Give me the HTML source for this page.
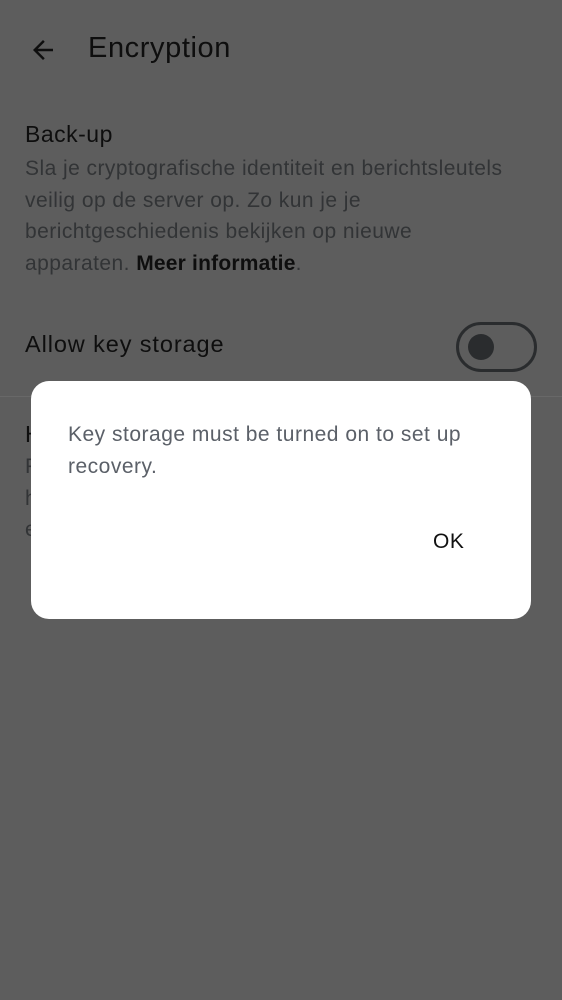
<!DOCTYPE html>
<html><head><style>
body{margin:0;width:562px;height:1000px;background:#5d5d5d;font-family:"Liberation Sans",sans-serif;position:relative;overflow:hidden}
.t{position:absolute;white-space:nowrap}
</style></head><body>
<svg class="t" style="left:28px;top:35px" width="30" height="30" viewBox="0 0 24 24"><path d="M20 11H7.8l5.6-5.6L12 4l-8 8 8 8 1.4-1.4L7.8 13H20z" fill="#0e0e0e"/></svg>
<div class="t" style="left:88px;top:32px;font-size:29px;letter-spacing:0.6px;color:#0e0e0e">Encryption</div>
<div class="t" style="left:25px;top:121px;font-size:23px;letter-spacing:0.5px;color:#0e0e0e">Back-up</div>
<div class="t" style="left:25px;top:153px;font-size:21px;letter-spacing:0.45px;line-height:31.5px;color:#323436">Sla je cryptografische identiteit en berichtsleutels<br>veilig op de server op. Zo kun je je<br>berichtgeschiedenis bekijken op nieuwe<br>apparaten. <b style="color:#0e0e0e;letter-spacing:0.2px">Meer informatie</b>.</div>
<div class="t" style="left:25px;top:331px;font-size:23.5px;letter-spacing:0.9px;color:#0e0e0e">Allow key storage</div>
<div class="t" style="left:456px;top:322px;width:81px;height:50px;border:3px solid #2a2c2e;border-radius:26px;box-sizing:border-box"></div>
<div class="t" style="left:468px;top:334px;width:26px;height:26px;border-radius:50%;background:#2a2c2e"></div>
<div class="t" style="left:0;top:396px;width:562px;height:1px;background:#686868"></div>
<div class="t" style="left:25px;top:421px;font-size:23px;color:#0e0e0e">H</div>
<div class="t" style="left:25px;top:451px;font-size:21px;line-height:31.5px;color:#323436">P<br>h<br>e</div>
<div class="t" style="left:31px;top:381px;width:500px;height:238px;background:#fff;border-radius:18px"></div>
<div class="t" style="left:68px;top:419px;font-size:21px;letter-spacing:0.5px;line-height:31.5px;color:#5b6068">Key storage must be turned on to set up<br>recovery.</div>
<div class="t" style="left:433px;top:530px;font-size:21px;letter-spacing:0.5px;color:#111">OK</div>
</body></html>
